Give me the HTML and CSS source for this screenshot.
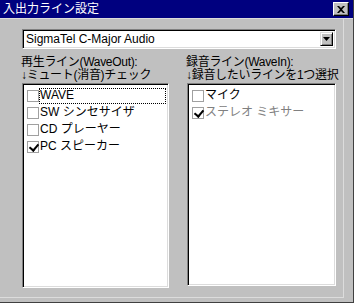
FILE: index.html
```html
<!DOCTYPE html>
<html lang="ja">
<head>
  <meta charset="UTF-8">
  <title>入出力ライン設定</title>
  <link rel="stylesheet" href="styles.css">
</head>
<body>
  <div class="window">
    <!-- Title bar -->
    <div class="titlebar">
      <span class="title">入出力ライン設定</span>
      <button class="close-btn">
        <svg width="8" height="7" viewBox="0 0 8 7"><path d="M0 0h2l2 2 2-2h2L5 3.5 8 7H6L4 5 2 7H0l3-3.5z" fill="#000"/></svg>
      </button>
    </div>

    <div class="content">
      <!-- Device combo -->
      <div class="combo">
        <span class="combo-text">SigmaTel C-Major Audio</span>
        <span class="combo-btn">
          <svg width="7" height="4" viewBox="0 0 7 4"><path d="M0 0h7L3.5 4z" fill="#000"/></svg>
        </span>
      </div>

      <div class="columns">
        <div class="col col-left">
          <div class="label"><p>再生ライン(WaveOut):</p><p>↓ミュート(消音)チェック</p></div>
          <ul class="listbox">
            <li class="item"><span class="check"></span><span class="item-text focus">WAVE</span></li>
            <li class="item"><span class="check"></span><span class="item-text">SW シンセサイザ</span></li>
            <li class="item"><span class="check"></span><span class="item-text">CD プレーヤー</span></li>
            <li class="item"><span class="check checked"></span><span class="item-text">PC スピーカー</span></li>
          </ul>
        </div>
        <div class="col col-right">
          <div class="label"><p>録音ライン(WaveIn):</p><p>↓録音したいラインを1つ選択</p></div>
          <ul class="listbox">
            <li class="item"><span class="check"></span><span class="item-text">マイク</span></li>
            <li class="item disabled"><span class="check checked"></span><span class="item-text">ステレオ ミキサー</span></li>
          </ul>
        </div>
      </div>
    </div>
  </div>
</body>
</html>
```

FILE: styles.css
```css
* {
  margin: 0;
  padding: 0;
  box-sizing: border-box;
  font-family: 'Liberation Sans', 'Noto Sans CJK JP', sans-serif;
}

body {
  background: #c0c0c0;
  font-size: 12px;
  color: #000;
}

.window {
  width: 354px;
  height: 303px;
  background: #c0c0c0;
  border-right: 1px solid #404040;
  border-bottom: 1px solid #404040;
  display: flex;
  flex-direction: column;
}

/* Title bar */
.titlebar {
  height: 19px;
  background: #00007f;
  color: #fff;
  display: flex;
  align-items: center;
  justify-content: space-between;
  padding: 0 4px 0 3px;
  border-bottom: 1px solid #dcdcdc;
}

.title {
  font-size: 12px;
  line-height: 14px;
}

.close-btn {
  width: 16px;
  height: 14px;
  background: #c0c0c0;
  border: 1px solid;
  border-color: #fff #000 #000 #fff;
  box-shadow: inset -1px -1px 0 #808080;
  display: flex;
  align-items: center;
  justify-content: center;
}

.content {
  flex: 1;
  padding: 10px 0 0 22px;
  border-right: 1px solid #dcdcdc;
  border-bottom: 1px solid #dcdcdc;
  margin-right: 9px;
  margin-bottom: 4px;
}

/* Combo box */
.combo {
  width: 314px;
  height: 20px;
  background: #fff;
  border: 1px solid;
  border-color: #808080 #fff #fff #808080;
  box-shadow: inset 1px 1px 0 #000, inset -1px -1px 0 #dcdcdc;
  display: flex;
  align-items: center;
  justify-content: space-between;
  padding: 0 2px 0 2px;
}

.combo-text {
  font-size: 12px;
  line-height: 14px;
  padding-left: 1px;
}

.combo-btn {
  width: 13px;
  height: 14px;
  background: #c0c0c0;
  border: 1px solid;
  border-color: #dcdcdc #000 #000 #dcdcdc;
  box-shadow: inset 1px 1px 0 #fff, inset -1px -1px 0 #808080;
  display: flex;
  align-items: center;
  justify-content: center;
}

/* Two columns */
.columns {
  display: flex;
  gap: 18px;
  margin-top: 6px;
}

.col-left .listbox {
  width: 147px;
  height: 205px;
}

.col-right .listbox {
  width: 149px;
  height: 203px;
}

.label {
  font-size: 12px;
  height: 28px;
  margin-left: -1px;
  letter-spacing: -0.3px;
}

.label p {
  height: 13px;
  line-height: 14px;
  overflow: visible;
}

.listbox {
  list-style: none;
  background: #fff;
  border: 1px solid;
  border-color: #808080 #fff #fff #808080;
  box-shadow: inset 1px 1px 0 #000, inset -1px -1px 0 #dcdcdc;
  padding: 3px 2px 0 3px;
}

.item {
  height: 17px;
  display: flex;
  align-items: center;
}

.check {
  width: 12px;
  height: 12px;
  border: 1px solid #a0a0a0;
  background: #fff;
  margin-left: 1px;
  position: relative;
  flex-shrink: 0;
}

.check.checked::after {
  content: "";
  position: absolute;
  left: 3px;
  top: 0;
  width: 4px;
  height: 7px;
  border: solid #000;
  border-width: 0 2px 2px 0;
  transform: rotate(40deg);
}

.item-text {
  font-size: 12px;
  line-height: 15px;
  height: 16px;
  padding-left: 1px;
  flex: 1;
}

.item-text.focus {
  outline: 1px dotted #000;
  outline-offset: -1px;
}

.item.disabled .item-text {
  color: #808080;
}
```
